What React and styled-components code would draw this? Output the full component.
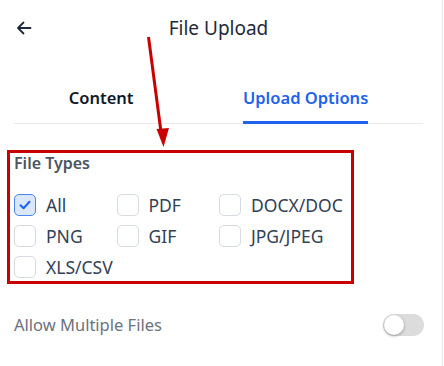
import React, { useState } from "react"
import styled, { createGlobalStyle } from "styled-components"

const GlobalStyle = createGlobalStyle`
  html, body {
    margin: 0;
    padding: 0;
    background: #fff;
  }
  body {
    font-family: "Segoe UI", "Noto Sans", "Open Sans", sans-serif;
    -webkit-font-smoothing: antialiased;
  }
`

const Panel = styled.div`
  position: relative;
  width: 443px;
  height: 366px;
  box-sizing: border-box;
  border-right: 1px solid #e5e7eb;
  padding: 0 19px 0 14px;
  overflow: hidden;
`

const Header = styled.header`
  display: grid;
  grid-template-columns: 40px 1fr 40px;
  align-items: center;
  height: 56px;
`

const BackButton = styled.button`
  display: flex;
  align-items: center;
  justify-content: center;
  width: 20px;
  height: 20px;
  margin-left: 0;
  padding: 0;
  border: none;
  background: none;
  color: #1e293b;
  cursor: pointer;
`

const Title = styled.h1`
  margin: 0;
  text-align: center;
  font-size: 19px;
  font-weight: 400;
  color: #1f2937;
`

const TabList = styled.div`
  display: flex;
  justify-content: space-around;
  padding-top: 30px;
  box-shadow: inset 0 -1px 0 #e8eaef;
`

const Tab = styled.button`
  padding: 0 0 11px;
  border: none;
  border-bottom: 3px solid ${(p) => (p.$active ? "#1d63ed" : "transparent")};
  background: none;
  font-family: inherit;
  font-size: 16.5px;
  line-height: 24px;
  font-weight: 600;
  color: ${(p) => (p.$active ? "#1d63ed" : "#111827")};
  cursor: pointer;
`

const Section = styled.section`
  margin-top: 29px;
`

const SectionTitle = styled.h2`
  margin: 0 0 20px;
  font-size: 16px;
  line-height: 20px;
  font-weight: 600;
  color: #4b5563;
`

const TypeGrid = styled.div`
  display: grid;
  grid-template-columns: repeat(3, 102.5px);
  row-gap: 9px;
  padding-top: 1px;
`

const TypeOption = styled.label`
  display: flex;
  align-items: center;
  gap: 10px;
  white-space: nowrap;
  font-size: 17.5px;
  line-height: 22px;
  color: #334155;
  cursor: pointer;
`

const Box = styled.span`
  display: flex;
  align-items: center;
  justify-content: center;
  flex: none;
  width: 22px;
  height: 22px;
  box-sizing: border-box;
  border-radius: 5px;
  border: 1px solid ${(p) => (p.$checked ? "#4a86f0" : "#d6dae1")};
  background: ${(p) => (p.$checked ? "#dbe7fd" : "#fff")};
  color: #1d63ed;
`

const SettingRow = styled.div`
  display: flex;
  align-items: center;
  justify-content: space-between;
  margin-top: 35px;
`

const SettingLabel = styled.span`
  font-size: 16.5px;
  color: #6b7280;
`

const Switch = styled.button`
  position: relative;
  width: 41px;
  height: 22px;
  padding: 0;
  margin-right: -1px;
  border: none;
  border-radius: 11px;
  background: ${(p) => (p.$on ? "#1d63ed" : "#dcdcdc")};
  cursor: pointer;

  &::after {
    content: "";
    position: absolute;
    top: 1px;
    left: ${(p) => (p.$on ? "20px" : "1px")};
    width: 20px;
    height: 20px;
    border-radius: 50%;
    background: #fff;
    box-shadow: 0 1px 3px rgba(0, 0, 0, 0.35);
  }
`

// red callout drawn over the screenshot
const Callout = styled.div`
  position: absolute;
  left: 7px;
  top: 150px;
  width: 347px;
  height: 134px;
  box-sizing: border-box;
  border: 3px solid #c80000;
  pointer-events: none;
`

const CalloutArrow = styled.svg`
  position: absolute;
  left: 0;
  top: 0;
  pointer-events: none;
`

const fileTypes = ["All", "PDF", "DOCX/DOC", "PNG", "GIF", "JPG/JPEG", "XLS/CSV"]

const Checkbox = ({ checked }) => (
  <Box $checked={checked}>
    {checked && (
      <svg width="14" height="14" viewBox="0 0 14 14" fill="none">
        <path
          d="M2.5 7.2 5.6 10.2 11.5 3.8"
          stroke="currentColor"
          strokeWidth="2"
          strokeLinecap="round"
          strokeLinejoin="round"
        />
      </svg>
    )}
  </Box>
)

const App = () => {
  const [selected, setSelected] = useState(["All"])
  const [multiple, setMultiple] = useState(false)

  const toggle = (t) =>
    setSelected((s) => (s.includes(t) ? s.filter((x) => x !== t) : [...s, t]))

  return (
    <Panel>
      <GlobalStyle />
      <Header>
        <BackButton aria-label="Back">
          <svg width="16" height="16" viewBox="0 0 16 16" fill="none">
            <path
              d="M14.5 8H2M7.5 2.5 2 8l5.5 5.5"
              stroke="currentColor"
              strokeWidth="1.8"
              strokeLinecap="round"
              strokeLinejoin="round"
            />
          </svg>
        </BackButton>
        <Title>File Upload</Title>
        <span />
      </Header>

      <TabList>
        <Tab>Content</Tab>
        <Tab $active>Upload Options</Tab>
      </TabList>

      <Section>
        <SectionTitle>File Types</SectionTitle>
        <TypeGrid>
          {fileTypes.map((t) => (
            <TypeOption key={t} onClick={() => toggle(t)}>
              <Checkbox checked={selected.includes(t)} />
              {t}
            </TypeOption>
          ))}
        </TypeGrid>
      </Section>

      <SettingRow>
        <SettingLabel>Allow Multiple Files</SettingLabel>
        <Switch $on={multiple} onClick={() => setMultiple(!multiple)} />
      </SettingRow>

      <Callout />
      <CalloutArrow width="444" height="366">
        <line x1="148.5" y1="37" x2="161" y2="132" stroke="#c80000" strokeWidth="3" />
        <polygon points="156.5,129 169,128 163.5,147" fill="#c80000" />
      </CalloutArrow>
    </Panel>
  )
}

export default App
